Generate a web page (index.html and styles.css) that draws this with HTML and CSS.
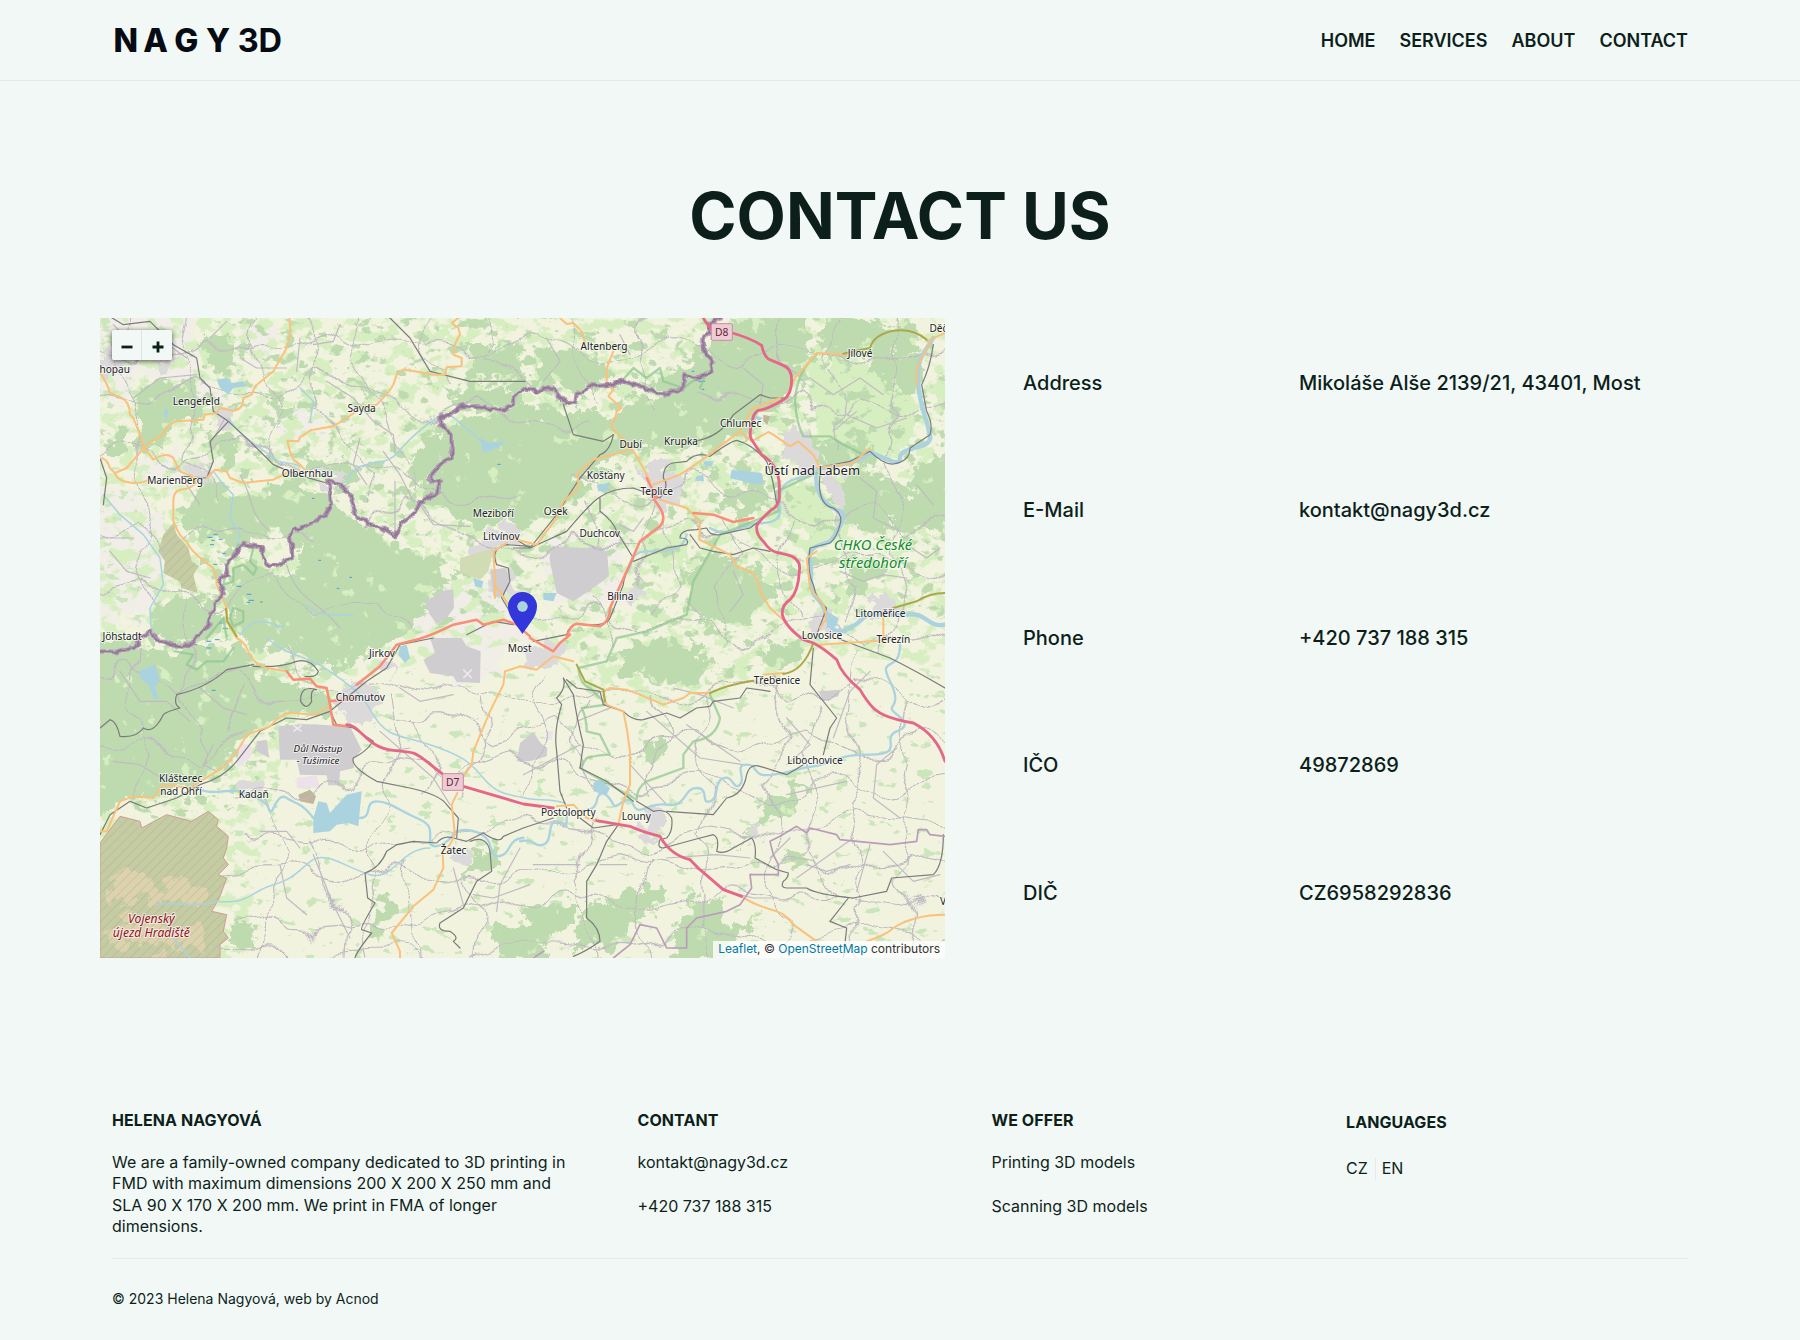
FILE: index.html
```html
<!DOCTYPE html>
<html lang="en">
<head>
<meta charset="utf-8">
<title>Contact us | NAGY 3D</title>
<link rel="stylesheet" href="styles.css">
</head>
<body>
<header class="header">
  <svg class="logo" viewBox="0 0 180 44" width="180" height="44" aria-label="NAGY 3D">
    <text class="logo-name" y="34" x="1.6 31.2 62.2 94">NAGY</text>
    <text class="logo-suffix" y="34" x="125.8 146.4">3D</text>
  </svg>
  <nav class="nav"><a>HOME</a><a>SERVICES</a><a>ABOUT</a><a>CONTACT</a></nav>
</header>
<main class="main">
  <h1 class="title">CONTACT US</h1>
  <section class="contact">
    <div class="map">
      <svg class="map-canvas" viewBox="0 0 2535 1920" preserveAspectRatio="none">
        <defs>
          <filter id="rough" filterUnits="userSpaceOnUse" x="0" y="0" width="2535" height="1920" color-interpolation-filters="sRGB">
            <feTurbulence type="fractalNoise" baseFrequency="0.02" numOctaves="5" seed="4" result="n"/>
            <feDisplacementMap in="SourceGraphic" in2="n" scale="110" xChannelSelector="R" yChannelSelector="G"/>
          </filter>
          <filter id="web" filterUnits="userSpaceOnUse" x="0" y="0" width="2535" height="1920" color-interpolation-filters="sRGB">
            <feTurbulence type="fractalNoise" baseFrequency="0.007" numOctaves="2" seed="12" result="n"/>
            <feDisplacementMap in="SourceGraphic" in2="n" scale="130" xChannelSelector="R" yChannelSelector="G"/>
          </filter>
          <filter id="jitter" filterUnits="userSpaceOnUse" x="0" y="0" width="2535" height="1920" color-interpolation-filters="sRGB">
            <feTurbulence type="fractalNoise" baseFrequency="0.04" numOctaves="2" seed="9" result="n"/>
            <feDisplacementMap in="SourceGraphic" in2="n" scale="20" xChannelSelector="R" yChannelSelector="G"/>
          </filter>
          <filter id="meadow" filterUnits="userSpaceOnUse" x="0" y="0" width="2535" height="1920" color-interpolation-filters="sRGB">
            <feTurbulence type="fractalNoise" baseFrequency="0.02 0.026" numOctaves="5" seed="21"/>
            <feColorMatrix values="0 0 0 0 .843  0 0 0 0 .933  0 0 0 0 .757  12 0 0 0 -6.1" result="p"/>
            <feComposite in="p" in2="SourceGraphic" operator="in"/>
          </filter>
          <filter id="groves" filterUnits="userSpaceOnUse" x="0" y="0" width="2535" height="1920" color-interpolation-filters="sRGB">
            <feTurbulence type="fractalNoise" baseFrequency="0.022 0.028" numOctaves="5" seed="37"/>
            <feColorMatrix values="0 0 0 0 .745  0 0 0 0 .859  0 0 0 0 .690  0 14 0 0 -8.4" result="p"/>
            <feComposite in="p" in2="SourceGraphic" operator="in"/>
          </filter>
          <filter id="copse" filterUnits="userSpaceOnUse" x="0" y="0" width="2535" height="1920" color-interpolation-filters="sRGB">
            <feTurbulence type="fractalNoise" baseFrequency="0.02 0.034" numOctaves="5" seed="52"/>
            <feColorMatrix values="0 0 0 0 .80  0 0 0 0 .90  0 0 0 0 .735  0 16 0 0 -10.6" result="p"/>
            <feComposite in="p" in2="SourceGraphic" operator="in"/>
          </filter>
          <filter id="clearing" filterUnits="userSpaceOnUse" x="0" y="0" width="2535" height="1920" color-interpolation-filters="sRGB">
            <feTurbulence type="fractalNoise" baseFrequency="0.018" numOctaves="5" seed="64"/>
            <feColorMatrix values="0 0 0 0 .843  0 0 0 0 .933  0 0 0 0 .757  0 0 16 0 -11.2" result="p"/>
            <feComposite in="p" in2="SourceGraphic" operator="in"/>
          </filter>
          <pattern id="hatch" width="20" height="20" patternUnits="userSpaceOnUse" patternTransform="rotate(45)">
            <rect width="20" height="20" fill="#cfae8c" fill-opacity=".32"/>
            <rect width="2.5" height="20" fill="#d08f78" fill-opacity=".4"/>
          </pattern>
        </defs>
        <rect width="2535" height="1920" fill="#f1f3de"/>

        <!-- open land -->
        <g filter="url(#rough)" fill="#f1eee8">
          <path d="M-40-40H250L300 170 210 200 120 180 60 250-40 230zM230 150L340 180 360 260 250 240zM500 260L640 250 680 320 620 370 540 350 490 300zM-40 520L90 510 200 620 180 720 210 820 150 900-40 900zM150 420H330V470L200 520 100 480zM390 20H520L510 140 440 120zM960 820L1180 770 1260 860 1260 960 1180 1080 1050 1100 950 960zM1330 670L1560 660 1590 850 1440 880 1340 830zM1600 480L1720 440 1800 520 1700 560z"/>
        </g>

        <!-- meadows and groves -->
        <path filter="url(#meadow)" d="M0 0H2535V1050L2240 1010 1760 1180 1480 1130 1300 960 900 1050 740 1100 560 1260 500 1500 430 1920H0z"/>
        <path filter="url(#rough)" fill="#d7eec1" d="M2120 130L2300 130 2420 240 2450 320 2400 400 2300 420 2200 370 2140 300zM2060 480L2160 520 2230 640 2180 690 2100 650 2040 580zM1130 480L1230 500 1270 560 1180 570zM1240 330L1370 300 1400 340 1290 360zM1640 640L1760 650 1800 720 1700 760 1600 720z"/>
        <path filter="url(#groves)" d="M400 0H2535V900L2240 940 1860 1100 1480 1070 1300 860 900 960 700 1100 560 1260 400 1500H0V1000L300 900V200z"/>
        <path filter="url(#copse)" d="M0 0H400V960H0zM400 1050H2535V1920H400z"/>

        <!-- forests -->
        <g filter="url(#rough)" fill="#bedbb0" id="forest">
          <path d="M310 50L400 60 410 110 370 170 320 150z"/>
          <path d="M150 200L270 180 320 230 330 290 240 310 200 350 160 390 120 370 120 260z"/>
          <path d="M500 240L580 250 570 300 520 310zM350 350L410 350 430 420 380 450 340 400zM0 350L70 340 80 400 30 430z"/>
          <path d="M575 390L660 420 750 430 780 470 740 500 700 480 620 450z"/>
          <path d="M440 520L560 490 670 510 710 580 620 640 590 700 540 650 500 650 430 690 390 660 260 650 240 600 270 530 350 480 400 520z"/>
          <path d="M930 420L1010 350 1090 300 1280 280 1420 270 1540 300 1600 240 1780 140 1840 20 2100-20 2140 110 2090 180 2060 250 1980 280 1930 350 1760 400 1600 400 1500 450 1420 540 1330 600 1260 620 1130 640 1020 560 970 560 950 500z"/>
          <path d="M1030 220L1120 200 1280 210 1280 280 1080 270zM1110 70L1230 60 1280 130 1290 210 1120 180z"/>
          <path d="M1300 90L1430 100 1520 130 1510 200 1400 230 1310 190z"/>
          <path d="M600 660L720 560 790 640 900 680 960 700 1020 750 1070 780 1000 830 960 880 930 960 800 990 720 1060 640 1040 560 990 450 1000 380 870 390 760 440 710 520 780 600 760z"/>
          <path d="M160 880L240 830 370 850 350 930 300 980 240 970 150 990z"/>
          <path d="M-20 950L100 980 200 1010 280 980 420 1000 470 1060 560 1080 680 1140 680 1190 540 1190 440 1260 380 1330 300 1380 200 1430 100 1440-20 1500z"/>
          <path d="M2160-20L2440 40 2490 100 2300 120 2150 110zM2320 110L2480 120 2460 200 2440 230 2350 200zM2450 440L2560 400V600L2460 650 2380 610 2420 540zM2180 360L2320 350 2300 440 2200 440zM2080 340L2200 380 2180 430 2100 400z"/>
          <path d="M2200 480L2380 470 2460 560 2440 620 2280 640 2210 600zM2250 760L2380 720 2350 780 2250 830zM1880 500L1980 490 2000 560 1920 590 1870 550z"/>
          <path d="M1780 740L1880 720 1980 760 2010 830 1960 900 1840 920 1760 880z"/>
          <path d="M1560 1000L1650 960 1780 980 1840 1040 1780 1100 1660 1090 1580 1060zM2000 1000L2110 960 2120 1020 2040 1060z"/>
          <path d="M1680 1260L1700 1290 1640 1340 1600 1330zM1990 1440L2060 1410 2140 1380 2060 1480 1940 1560 1870 1590 1960 1540z"/>
          <path d="M1290 1770L1420 1760 1420 1820 1330 1880 1340 1930 1240 1930zM1460 1760L1560 1740 1680 1680 1690 1750 1600 1810 1540 1890 1420 1880zM1740 1790L1850 1720 1890 1830 1990 1780 1870 1920 1720 1930zM2050 1620L2140 1600 2120 1640 2060 1650z"/>
          <path d="M820 1760L880 1720 870 1830 830 1870zM1100 1620L1180 1590 1190 1650 1110 1690zM380 1810L470 1830 460 1880 380 1880zM1180 1830L1290 1800 1280 1900 1200 1930z"/>
        </g>
        <use href="#forest" filter="url(#clearing)"/>

        <!-- towns -->
        <g filter="url(#rough)" fill="#dcd9da">
          <path d="M160 120L210 110 220 160 180 180zM0 120L60 100 80 150 40 190 0 180zM240 440L320 450 340 500 260 490zM350 270L400 280 390 330 350 320zM630 460L720 480 700 500 640 490z"/>
          <path d="M1100 680L1200 640 1280 620 1260 680 1130 710zM1180 760L1240 770 1230 830 1180 820zM1620 440L1720 450 1750 530 1680 570 1620 520zM1280 960L1400 970 1370 1050 1260 1050z"/>
          <path d="M2050 350L2110 330 2160 400 2170 460 2100 470 2050 400zM2140 440L2220 480 2240 620 2190 540zM730 1110L820 1090 840 1170 800 1210 720 1200 700 1150zM820 1040L880 1020 880 1080zM420 1370L490 1380 480 1440 420 1430zM1040 1590L1110 1600 1100 1630 1050 1640zM1630 1490L1700 1480 1680 1560 1620 1550zM1950 1530L1990 1520 1990 1570 1950 1570zM2310 830L2390 830 2380 890 2310 890zM2140 880L2200 900 2190 960 2140 950zM1560 800L1620 810 1600 860 1550 840z"/>
        </g>

        <!-- quarries -->
        <g fill="#d0cdd0">
          <path d="M1355 685L1460 690 1500 683 1522 708 1527 775 1480 810 1420 850 1370 825 1360 780 1348 720z"/>
          <path d="M975 850L1040 815 1060 815 1062 870 1040 900 1010 918 990 890zM990 960L1085 960 1100 985 1142 1000 1140 1095 1070 1092 1060 1075 990 1065 970 1025 1005 1005z"/>
          <path d="M535 1225L610 1218 750 1225 785 1295 760 1325 762 1350 720 1360 718 1402 685 1402 680 1372 600 1370 590 1325 540 1325zM470 1270L500 1265 508 1320 470 1300zM1260 1275L1300 1242 1322 1275 1342 1290 1340 1315 1290 1330 1250 1330zM2155 1120L2220 1115 2215 1135 2170 1148zM1170 755L1215 750 1230 780 1210 840 1180 835z"/>
          <path fill="#bfb69b" d="M595 1430L630 1415 648 1435 640 1458 600 1450zM1990 290L2010 295 2002 320 1990 310z"/>
          <path fill="#eee2ea" d="M590 1380L650 1372 660 1410 590 1410zM420 1270L460 1290 450 1320 410 1350zM1340 1240L1360 1240 1355 1265 1335 1265z"/>
          <path fill="#d2dcb4" d="M1080 720L1180 690 1165 760 1140 785 1080 760z"/>
        </g>
        <path d="M1090 1055L1115 1080M1115 1055L1090 1080M580 1222L605 1240M605 1222L580 1240" fill="none" stroke="#eceaec" stroke-width="5"/>

        <!-- military areas -->
        <path d="M220 615L230 650 265 690 275 730 297 745 280 770 293 825 245 810 238 790 190 765 195 730 175 700 190 650z" fill="#bedbb0"/>
        <path d="M220 615L230 650 265 690 275 730 297 745 280 770 293 825 245 810 238 790 190 765 195 730 175 700 190 650z" fill="url(#hatch)"/>
        <path d="M0 1575L60 1495 120 1510 125 1530 200 1490 275 1510 325 1480 355 1505 350 1525 385 1555 380 1590 370 1620 385 1640 355 1670 380 1680 360 1735 335 1780 380 1790 370 1840 385 1860 360 1880V1920H0z" fill="#bedbb0"/>
        <path filter="url(#rough)" fill="#e0e6be" d="M40 1680L120 1660 170 1700 250 1690 310 1730 300 1780 200 1740 100 1760 40 1740zM30 1810L130 1790 200 1830 310 1810 320 1900H180L120 1870 30 1880z"/>
        <path d="M0 1575L60 1495 120 1510 125 1530 200 1490 275 1510 325 1480 355 1505 350 1525 385 1555 380 1590 370 1620 385 1640 355 1670 380 1680 360 1735 335 1780 380 1790 370 1840 385 1860 360 1880V1920H0z" fill="url(#hatch)" stroke="#cf9d92" stroke-width="3"/>

        <!-- lesser roads -->
        <g class="lane" filter="url(#web)">
          <path d="M-60 60L180 130 330 60 470 120 700 50 830 90 980 60 1160 110 1320 50 1530 120 1700 60 1900 130 2110 70 2300 140 2600 70"/>
          <path d="M-60 230L150 260 310 190 500 220 620 160 850 230 960 300 1150 250 1290 320 1460 340M1800 260L1960 220 2130 280 2300 240 2450 300 2600 260"/>
          <path d="M-60 420L130 380 250 430 430 370 620 460 800 420 900 500 1080 560 1240 500M1430 480L1620 560 1760 480 1960 530 2130 620 2290 560 2420 640 2600 580"/>
          <path d="M-60 640L90 600 200 690 420 620 510 670 640 660M780 600L940 560 1100 640 1280 720 1420 640 1600 700 1780 620 1950 700 2120 780 2300 700 2480 800 2600 760"/>
          <path d="M-60 830L140 800 330 860 520 780 640 880 820 860 950 960M1280 900L1480 880 1600 960 1800 920 1960 980 2120 900 2290 980 2460 940 2600 1000"/>
          <path d="M-60 1080L90 1040 230 1120 400 1080 560 1160 700 1110 880 1080 1060 1140 1200 1110 1340 1180 1500 1090 1700 1150 1900 1090 2070 1160 2260 1080 2420 1160 2600 1100"/>
          <path d="M-60 1290L160 1270 290 1340 430 1240M870 1200L1040 1190 1180 1280 1360 1230 1540 1330 1760 1240 1920 1310 2100 1230 2280 1310 2470 1240 2600 1300"/>
          <path d="M400 1440L580 1430 760 1400 880 1330 1060 1360 1250 1300 1440 1370 1620 1420 1830 1370 2010 1460 2200 1380 2340 1430 2600 1370"/>
          <path d="M430 1550L620 1570 840 1580 1060 1560 1210 1500 1420 1540 1640 1600 1840 1530 2040 1560 2260 1500 2600 1540"/>
          <path d="M390 1660L560 1640 760 1700 940 1660 1140 1690 1350 1650 1560 1610 1800 1660 2010 1620 2230 1660 2420 1600 2600 1660"/>
          <path d="M420 1790L600 1840 780 1810 970 1830 1190 1760 1400 1730 1620 1770 1820 1720 2030 1750 2260 1740 2600 1780"/>
          <path d="M370 1890L620 1900 850 1890 1080 1920 1320 1860 1560 1880 1790 1840 2060 1890 2310 1830 2600 1870"/>
          <path d="M80-60L60 130 110 260 90 400 150 560 110 700 160 860M270-60L240 100 290 250 260 420 330 560M480-60L460 120 540 280 500 420M620-60L610 120 650 250 740 330 810 460 780 560M820-60L760 120 860 290 900 420 960 540M1000-60L980 120 1060 200"/>
          <path d="M1180-60L1150 120 1290 190M1400-60L1430 140 1500 260M1650-60L1610 120 1660 260M2060-60L2030 120 2080 230M2260-60L2180 110 2230 240 2180 380M2410-60L2370 120 2400 280 2340 430 2400 560 2350 700 2420 830 2360 1010"/>
          <path d="M240 860L290 990 240 1130 320 1260 290 1410M120 1000L90 1160 140 1300 90 1430M420 1110L380 1260M560 980L620 1080M880 1110L900 1260 860 1410 790 1560 830 1700 780 1820 820 1980"/>
          <path d="M490 1480L550 1600 490 1700 500 1830 460 1980M640 1560L690 1700 740 1830 730 1980M940 1190L1000 1320 960 1440M960 1640L930 1780 950 1980M1140 1130L1160 1280 1100 1440M1090 1690L1140 1800 1120 1980"/>
          <path d="M1340 1040L1290 1200 1330 1300 1270 1420M1470 1120L1420 1290 1500 1430M1660 1150L1700 1300 1660 1420M1820 1110L1780 1280 1850 1420 1800 1560 1830 1700 1780 1830 1810 1980M2000 1100L2060 1260 1990 1400 2060 1550 2000 1700 2060 1830 2010 1980"/>
          <path d="M2150 1150L2100 1310 2170 1450 2120 1610 2190 1740M2260 1000L2230 1180 2300 1340 2240 1480 2290 1650 2240 1780 2300 1980M2420 1150L2390 1340 2440 1480 2390 1650 2450 1800 2410 1980M1460 1500L1410 1680 1500 1850 1470 1980M1640 1620L1600 1790 1660 1980"/>
          <path d="M1470 860L1530 960M1700 620L1740 780 1660 880M1860 600L1900 720 1840 820 1880 960M2080 600L2040 760 2100 900M2210 640L2280 800 2230 920M1640 560L1600 680 1640 800M1460 560L1500 660"/>
        </g>
        <g class="lane">
          <path d="M375 300L330 380M420 470C470 560 440 580 510 640M560 740C590 850 650 840 720 930M680 190L760 240 820 310 880 350 885 400M885 490V640M960 560L1000 620 1110 625M1260 1590L1200 1700 1190 1780M840 1240L1000 1380 1050 1460M640 1610L700 1760 750 1860M1060 1650L1090 1760M1590 1340L1700 1460M1760 1220L1920 1330M2090 1680L2260 1560M2270 1720L2310 1580M1270 1370L1440 1280M2060 1430L2240 1390"/>
          <path d="M40 20L110 90 190 70 260 120M100 240L180 180 290 170M330 60L380 10M420 120L470 150 560 150M600 60L590 160M720 20L700 70 640 80M780 360L760 440 800 500M850 400L900 470 940 550M30 700L80 760 150 780M0 660L100 660M260 500L300 560M1340 60L1380 130 1330 190M1560 50L1590 110M1930 150L1990 200 1980 260M2130 180L2200 230 2280 180 2350 230M2240 290L2330 330 2420 300M2200 340L2270 280M2280 480L2330 520 2320 600 2400 640M2450 500L2500 560M1560 620L1600 640 1630 600M1760 850L1800 890M1900 760L1930 830 1890 880M2220 760L2290 790 2350 770 2420 780M2420 680L2480 720 2520 690M60 1060L120 1150 200 1150 270 1210M300 1110L370 1170 440 1190M40 1330L120 1340 200 1390M340 1280L310 1340 350 1360M480 1540L560 1540 600 1590M540 1640L560 1740 620 1790M860 1300L930 1290M900 1110L960 1150 1060 1130M1430 1210L1530 1170M1640 1180L1800 1320 1930 1340M1720 1110L1800 1130 1900 1170M2060 1200L2130 1280 2060 1340M2310 1060L2250 1120 2200 1260M2390 1290L2330 1340 2320 1440 2400 1500M2350 1600L2440 1690 2520 1670M1700 1620L1850 1610 1950 1620M1880 1720L1960 1740 2030 1740M1500 1640L1580 1640M1300 1640L1370 1640 1440 1640M1120 1730L1180 1740 1290 1700M2070 1560L2010 1620M2120 1640L2180 1660 2250 1640"/>
        </g>

        <!-- water -->
        <g fill="#aad3df">
          <path d="M350 185L380 180 395 195 430 190 440 205 400 210 385 230 360 210zM1140 360L1170 375 1220 370 1190 390 1150 405 1145 385zM1895 455L1985 465 1992 495 1970 500 1890 480zM1490 500L1530 495 1520 520 1495 520zM1810 430L1840 430 1835 445 1815 445zM1790 475L1810 470 1812 490 1785 488zM1960 290L1990 300 1975 308z"/>
          <path d="M115 1060L165 1040 180 1085 165 1105 175 1145 160 1140 145 1100 120 1080zM640 1500L655 1450 680 1455 690 1485 740 1430 785 1420 775 1525 745 1515 710 1520 690 1540 640 1545zM1480 1395L1500 1385 1530 1410 1520 1430 1480 1420zM900 985L920 980 930 1020 915 1035 895 1010zM2180 880L2215 900 2210 925 2180 930zM1330 825L1370 825 1360 850 1330 845zM190 280L205 270 200 310zM1120 780L1150 790 1145 810 1125 805z"/>
        </g>
        <path class="marsh" d="M322 658h16M341 649h12M334 667h10M356 664h10M330 680h12M366 706h12M340 739h12M410 805h14M440 829h14M446 847h16M480 852h8M440 853h10M358 915h10M368 931h16M710 811h8M748 778h8M1192 439h10M636 541h8M655 727h8M320 970h14M345 965h14M318 990h16M335 1117h12M1795 190h20M1805 214h8M1775 160h8"/>
        <g class="river">
          <path d="M10 530L60 590 130 650 180 720 190 800 150 870 155 960M340 460L370 500 400 530 390 600 420 650 410 680M385 300C420 360 500 400 520 420S570 430 600 445M740 500C750 440 800 440 850 430S900 370 1010 300M1050 290L1110 340 1145 370M600 210L640 250 630 310M420 950C470 890 500 910 550 930M620 860C660 900 700 890 760 890"/>
          <path d="M500 960C570 1020 620 1010 690 1060S780 1120 820 1190 900 1250 990 1280 1110 1330 1150 1380 1230 1430 1275 1440 1340 1440 1395 1455"/>
          <path class="wide" d="M290 1410C350 1440 380 1400 450 1430S500 1470 510 1480 530 1420 560 1440 600 1450 640 1500M780 1500C820 1500 790 1450 830 1450S900 1480 950 1500 990 1540 990 1570 1040 1580 1060 1550 1160 1540 1170 1580 1190 1620 1210 1610 1230 1560 1270 1560"/>
          <path class="wide" d="M1260 1570C1310 1560 1300 1590 1330 1580S1340 1510 1370 1510 1400 1540 1400 1500 1480 1500 1490 1450 1530 1440 1540 1460 1580 1420 1600 1460 1640 1450 1700 1460 1750 1410 1790 1410 1800 1460 1830 1450 1840 1390 1870 1380 1900 1420 1920 1400 1900 1340 1940 1340 1950 1380 2020 1370 2090 1350 2140 1345 2200 1310 2310 1310 2340 1260 2390 1240 2400 1200 2380 1180 2410 1170 2370 1090 2400 1070 2400 980"/>
          <path d="M350 1750C450 1760 450 1720 520 1700S600 1650 640 1625 740 1650 810 1670 900 1590 990 1590M170 1760C220 1750 300 1770 350 1750M220 1860L270 1920"/>
          <path class="elbe" d="M2500 60C2460 120 2450 130 2455 200S2480 300 2490 350 2400 380 2400 420 2320 390 2300 410 2230 440 2160 450M2150 460C2140 540 2190 570 2220 580S2200 660 2190 670 2120 680 2130 720 2120 810 2150 840 2170 880 2190 920 2260 930 2290 900 2360 900 2420 890 2480 930 2535 920"/>
          <path class="wide" d="M2140 470C2080 480 2030 490 2040 560S1980 610 1950 620 1880 660 1830 630M1760 650C1750 700 1700 700 1640 700S1600 760 1580 760"/>
        </g>

        <!-- nature reserve rims -->
        <g class="reserve">
          <path d="M380 750L415 680 460 690 450 730 470 750 460 770 430 740 400 750 400 790 370 800zM400 870L430 880 430 910 400 925 390 900zM320 960L370 900 380 960"/>
          <path d="M225 1000L280 1010 260 1040 290 1055 320 1030 370 1030 400 990"/>
          <path d="M1565 190L1600 150 1640 180 1680 150 1690 190 1750 210 1820 160 1800 210"/>
          <path d="M2150 110Q2090 160 2085 250 2090 320 2110 355L2190 355 2230 380 2290 410M2150 465L2030 520 2035 580 1860 650 1820 720 1780 790 1760 890 1640 940 1550 960 1520 1030 1435 1050Q1440 1100 1470 1110L1520 1160 1445 1170Q1460 1200 1460 1240L1500 1250 1530 1310Q1500 1310 1460 1320L1440 1350 1610 1445Q1610 1410 1640 1390L1750 1350 1750 1310 1780 1270Q1850 1260 1860 1200L1830 1130"/>
        </g>

        <!-- railways -->
        <g class="rail">
          <path d="M20-10L70 20 150 10 220 80 290 120 300 180 330 210 340 280 385 310 450 370 520 440 590 470 680 495M385 310L330 370 340 430 320 480 250 475M0 420L20 480 10 560M870 0L930 60 990 160 1110 190 1275 190M1390 260L1420 350 1510 370 1540 350"/>
          <path d="M1540 350Q1530 400 1500 410L1440 480Q1400 540 1370 590L1290 690 1240 660"/>
          <path d="M1240 690H1290L1400 640C1470 560 1500 510 1600 510L1680 540Q1710 500 1690 480 1690 440 1720 435L1760 430Q1790 400 1830 415 1890 370 1910 367 1960 380 2000 430 2020 480 2030 560M1500 540L1500 580Q1540 610 1550 640L1600 720Q1570 780 1570 800L1530 900Q1520 925 1450 920 1410 910 1400 950L1300 970M1600 730L1700 690 1760 680Q1770 660 1740 660 1740 635 1790 635L1820 630Q1830 655 1860 650L1950 630 1990 600M1770 650L1800 690 1840 700 1900 710 1960 690 2010 700"/>
          <path d="M1780 370Q1860 360 1900 290L1980 230 2010 240 2060 240M2150 450L2250 430 2310 400Q2350 440 2380 438 2430 430 2430 390L2490 350Q2500 320 2480 280L2465 200Q2490 150 2500 80"/>
          <path d="M2160 470Q2150 560 2200 570 2230 590 2220 620 2210 660 2190 675L2130 690Q2120 760 2140 800 2150 850 2180 870L2150 950M2210 960L2370 1020Q2450 1060 2535 1110M2140 990L2130 1100 2210 1200 2190 1230 2170 1310M1390 1080Q1400 1110 1370 1140L1385 1160Q1360 1240 1370 1300L1380 1420 1400 1470M1390 1080L1420 1130Q1430 1200 1450 1280L1440 1350 1520 1390 1600 1450M1400 1085L1430 1110 1500 1120 1510 1160 1570 1180Q1600 1210 1630 1205L1700 1185 1740 1200 1790 1170 1830 1165 1840 1150 1920 1140 1940 1110 2010 1120"/>
          <path d="M1610 1450L1660 1480Q1700 1470 1715 1500 1720 1540 1700 1560L1680 1565Q1670 1590 1690 1590L1800 1560 1840 1550Q1860 1560 1850 1600 1870 1610 1900 1590L1955 1560Q1970 1580 1965 1620L2030 1655 2065 1665Q2065 1680 2050 1690 2040 1710 2060 1710L2120 1710Q2150 1730 2260 1740L2360 1720 2375 1680 2500 1670Q2530 1640 2530 1550"/>
          <path d="M1555 1520L1520 1570 1490 1640 1460 1690 1460 1800Q1500 1830 1500 1870 1460 1900 1420 1915M1700 1480L1840 1490 1880 1440Q1930 1430 1940 1370 1950 1335 1980 1345L2060 1370 2110 1340M2245 1740L2190 1810 2240 1830 2230 1920"/>
          <path d="M0 1550L30 1490 90 1450 140 1470 230 1440 300 1400Q370 1380 410 1330L480 1240 560 1200 620 1205 690 1180 710 1220 760 1230 820 1270M815 1275Q800 1300 760 1320 750 1345 830 1390L930 1410Q1020 1430 1040 1460L1075 1500 1070 1560M690 1180L800 1090 860 1050 900 980 1000 960M1100 950L1180 910 1240 920M1235 890L1205 840 1230 790 1225 750 1190 740Q1170 690 1220 680L1290 685M460 1040L380 1055Q320 1110 230 1130 220 1160 240 1170 200 1180 190 1190 160 1250 130 1230 110 1260 60 1255 50 1210 30 1205L0 1230M460 1045Q540 1050 590 1030 630 1020 655 1060 650 1080 615 1075M650 1115Q600 1100 602 1150 620 1180 635 1150 630 1110 650 1115"/>
          <path d="M795 1665Q840 1650 860 1600L890 1580 940 1570 1010 1575Q1030 1550 1060 1560L1100 1570 1150 1545Q1200 1580 1210 1555L1270 1530 1360 1500M795 1665L803 1740 825 1755Q780 1830 785 1835L815 1845Q770 1900 765 1920M1110 1570Q1160 1550 1170 1600L1175 1660 1130 1690 1090 1770 1020 1815Q1010 1840 1050 1840 1080 1860 1060 1870L1080 1890M1440 1500L1480 1530 1550 1520"/>
        </g>

        <!-- main roads -->
        <g class="primary">
          <path d="M0 165Q20 190 30 225L60 237Q90 250 90 290L100 300 120 350 130 385 160 425Q200 400 220 420L240 460 290 480Q290 510 240 515 220 520 220 550L220 610Q240 660 260 670 270 700 340 750 350 770 350 800L380 870 380 910 410 960Q430 970 440 990 460 1040 500 1050L560 1060"/>
          <path d="M568 0L572 40 560 90 520 160 465 205 455 230 430 240Q430 275 400 278L360 270 350 285 315 290 310 305 230 310Q195 320 190 350L140 380 80 450 45 465Q50 490 100 495 140 495 150 480M0 420Q20 420 30 450L45 465M320 480L345 455 380 460 390 480 430 495 520 485 560 465M635 335L600 358 595 370 562 368 570 400 580 425 600 440 620 460M640 335L700 325 740 300 790 265 830 260Q870 220 880 200L890 170Q910 150 920 155L1000 170 1035 170 1040 148 1085 145 1085 120 1060 110Q1060 80 1080 50L1075 30 1055 15 1075 0"/>
          <path d="M1380 0L1400 18 1420 15 1445 40 1455 75M1540 100L1520 150 1520 200 1540 215 1525 235 1565 270 1550 280 1545 305 1535 315 1540 335 1595 390 1630 450 1650 490M1590 395L1480 425 1430 470Q1440 500 1430 515L1390 550 1370 600 1310 680 1230 660M1660 500L1740 470 1800 430 1920 340 1955 275 2040 240M2060 235L2085 180 2150 105 2240 110M2480 70L2535 45M2490 75L2450 150 2450 200M1920 340L1955 370 2005 342 2020 350 2070 385 2095 370 2140 410 2160 450M1680 545L1760 570 1800 610 1798 665 1850 690 1890 710 1910 745 1950 760Q1980 780 1980 820L2010 870 2060 915M2150 450L2260 435 2310 390M2150 700L2120 720 2130 810 2170 860 2180 900 2160 930M2350 890V960"/>
          <path d="M1260 1045L1310 1055 1360 1015 1420 1030M1510 1120L1530 1110 1580 1115 1620 1130 1690 1160 1750 1140 1770 1125 1830 1125M1510 1130L1520 1160 1570 1180 1580 1230 1590 1300 1590 1400 1570 1450 1555 1520M1370 1465L1420 1460 1460 1500 1500 1512M1990 1070L2050 1065M2160 980L2380 965M1925 1735Q1960 1760 2030 1780 2060 1790 2080 1820L2150 1870M2300 1870Q2360 1850 2380 1830 2440 1790 2535 1790"/>
          <path d="M0 1540L20 1540 40 1495 60 1450 100 1435 160 1440 190 1400 270 1410 350 1360Q400 1330 440 1250L510 1225Q550 1180 580 1185L640 1190 690 1165M1215 1060L1210 1100 1170 1180 1120 1300 1115 1340 1080 1390M1072 1425L1055 1460 1065 1550 1050 1580 1028 1600 1030 1650 1000 1715 940 1765 875 1845 900 1900V1920M1185 840L1185 780 1180 700 1220 675M1185 800L1225 860M1215 1060L1260 1045"/>
        </g>
        <path class="olive" d="M378 872L382 910 410 955M2230 107L2310 90Q2320 50 2380 38 2440 30 2480 65M2380 870L2450 850Q2490 825 2535 825M1430 1040L1455 1090 1510 1115 1515 1150M1830 1125Q1880 1100 1960 1088M2050 1068Q2110 1060 2140 975"/>
        <path class="trunk" d="M560 1060L580 1085 630 1082 650 1105 680 1110 690 1160 700 1220 740 1225M690 1150L770 1140M770 1100L840 1045 890 980 960 962Q1000 950 1060 920L1130 905 1150 920 1210 905 1250 920 1290 955M1400 960Q1410 920 1430 917L1500 925Q1530 910 1530 870L1580 760 1620 670 1680 625Q1700 600 1680 570L1660 540M1640 480L1670 540M1780 585L1840 590 1900 612 1960 600M1290 960L1360 1000 1380 975 1410 950"/>

        <!-- country and region borders -->
        <g class="frontier" filter="url(#jitter)">
          <path id="border" d="M1860 0L1825 15 1830 40 1808 60 1808 95 1840 130 1832 160 1790 183 1752 172 1750 210 1700 230 1675 228 1640 210 1600 200 1570 190 1530 200 1490 205 1465 200 1455 220 1430 228 1425 255 1390 250 1370 225 1345 208 1310 220 1275 212 1240 240 1238 265 1190 278 1140 265 1085 265 1050 290 1018 300 1022 320 1055 350 1055 420 1025 435 990 475 1000 490 1017 490 1015 525 960 550 945 585 905 615 885 655 840 625 805 622 798 605 770 600 750 530 722 498 685 488 690 565 672 595 600 632 580 635 570 655 578 720 508 745 490 725 485 688 430 678 380 735 385 770 358 785 372 830 350 850 330 890 328 920 292 955 280 975 240 985 180 970 150 940 125 960 100 990 50 1002 0 1000"/>
          <use class="frontier-core" href="#border"/>
        </g>
        <path class="region" d="M2535 1555L2490 1550 2480 1535 2455 1535 2450 1570 2370 1580 2220 1565 2210 1550 2130 1530 2120 1545 2090 1525 2040 1555 2010 1570 2020 1610 2035 1640 2035 1670 1950 1670 1955 1710 1920 1760 1880 1780 1790 1800 1760 1830 1760 1890 1700 1890 1670 1830 1620 1820 1590 1880 1540 1920M1300 1920L1330 1900"/>

        <!-- motorways -->
        <path class="motorway" d="M1810 0Q1825 25 1835 35M1897 45Q1950 60 1985 82 1990 110 2005 123L2045 140Q2075 150 2075 185 2075 230 2050 245 2000 275 1975 277 1960 285 1957 310 1945 350 1955 365L1985 410Q2035 440 2038 500V540Q2035 565 2015 575 1975 610 1970 625 1968 650 1990 670 2010 700 2030 703L2060 710Q2105 720 2098 760 2095 820 2070 845 2045 860 2047 890 2055 925 2110 965L2140 975Q2170 990 2210 1025 2225 1070 2280 1115 2300 1150 2320 1170 2350 1200 2440 1215 2510 1250 2535 1330"/>
        <path class="motorway" d="M740 1220C780 1220 800 1290 880 1297S940 1300 1030 1370M1090 1405L1270 1458 1360 1470M1490 1508L1590 1525Q1620 1540 1680 1555 1710 1610 1770 1625L1800 1655 1870 1715 1925 1735"/>

        <!-- road shields -->
        <g class="shield">
          <rect x="1834" y="17" width="63" height="50" rx="4"/><text x="1865" y="54">D8</text>
          <rect x="1027" y="1367" width="63" height="50" rx="4"/><text x="1058" y="1404">D7</text>
        </g>

        <!-- place names -->
        <g class="place">
          <text x="44" y="165">hopau</text><text x="289" y="260">Lengefeld</text><text x="785" y="283">Sayda</text>
          <text x="622" y="477">Olbernhau</text><text x="225" y="497">Marienberg</text><text x="1180" y="598">Meziboří</text>
          <text x="1204" y="667">Litvínov</text><text x="66" y="967">Jöhstadt</text>
          <text x="1512" y="97">Altenberg</text><text x="2280" y="118">Jílové</text><text x="2515" y="42">Děč</text>
          <text x="1922" y="327">Chlumec</text><text x="1743" y="380">Krupka</text><text x="1592" y="391">Dubí</text>
          <text x="1517" y="482">Košťany</text><text x="1670" y="532">Teplice</text><text x="1367" y="592">Osek</text>
          <text x="1499" y="657">Duchcov</text><text x="1561" y="847">Bílina</text><text x="2341" y="898">Litoměřice</text>
          <text x="2166" y="963">Lovosice</text><text x="2380" y="975">Terezín</text><text x="1259" y="1003">Most</text>
          <text x="846" y="1017">Jirkov</text><text x="781" y="1150">Chomutov</text><text x="2031" y="1097">Třebenice</text>
          <text x="2145" y="1338">Libochovice</text><text x="242" y="1393">Klášterec</text><text x="243" y="1431">nad Ohří</text>
          <text x="461" y="1440">Kadaň</text><text x="1405" y="1495">Postoloprty</text><text x="1609" y="1505">Louny</text>
          <text x="1061" y="1609">Žatec</text><text x="2529" y="1762">V</text>
          <text class="place-city" x="2137" y="470">Ústí nad Labem</text>
          <text class="place-mine" x="654" y="1303">Důl Nástup</text><text class="place-mine" x="654" y="1339">- Tušimice</text>
          <text class="place-park" x="2319" y="697">CHKO České</text><text class="place-park" x="2319" y="751">středohoří</text>
          <text class="place-army" x="154" y="1814">Vojenský</text><text class="place-army" x="154" y="1857">újezd Hradiště</text>
        </g>
      </svg>
      <svg class="pin" viewBox="0 0 29 42" width="29" height="42"><path fill="#3336db" fill-rule="evenodd" d="M14.5 0A14.5 14.5 0 0 0 0 14.5C0 25 9 33 14.5 42 20 33 29 25 29 14.5A14.5 14.5 0 0 0 14.5 0zm0 9.6a5 5 0 1 1 0 10 5 5 0 0 1 0-10z"/><circle cx="14.5" cy="14.6" r="5" fill="#aad3df"/></svg>
      <div class="zoom">
        <button class="zoom-btn" aria-label="Zoom out"><svg width="12" height="12"><path d="M.5 6H11.5" stroke="currentColor" stroke-width="2.8"/></svg></button>
        <button class="zoom-btn" aria-label="Zoom in"><svg width="12" height="12"><path d="M.5 6H11.5M6 .5V11.5" stroke="currentColor" stroke-width="2.8"/></svg></button>
      </div>
      <div class="attribution"><a>Leaflet</a>, © <a>OpenStreetMap</a> contributors</div>
    </div>
    <dl class="details">
      <dt>Address</dt><dd>Mikoláše Alše 2139/21, 43401, Most</dd>
      <dt>E-Mail</dt><dd>kontakt@nagy3d.cz</dd>
      <dt>Phone</dt><dd>+420 737 188 315</dd>
      <dt>IČO</dt><dd>49872869</dd>
      <dt>DIČ</dt><dd>CZ6958292836</dd>
    </dl>
  </section>
</main>
<footer class="footer">
  <div class="footer-cols">
    <div class="col"><h2>HELENA NAGYOVÁ</h2><p class="about">We are a family-owned company dedicated to 3D printing in FMD with maximum dimensions 200 X 200 X 250 mm and SLA 90 X 170 X 200 mm. We print in FMA of longer dimensions.</p></div>
    <div class="col"><h2>CONTANT</h2><a>kontakt@nagy3d.cz</a><a>+420 737 188 315</a></div>
    <div class="col"><h2>WE OFFER</h2><a>Printing 3D models</a><a>Scanning 3D models</a></div>
    <div class="col col-lang"><h2>LANGUAGES</h2><div class="langs"><a>CZ</a><a>EN</a></div></div>
  </div>
  <p class="copyright">© 2023 Helena Nagyová, web by Acnod</p>
</footer>
</body>
</html>
```
FILE: styles.css
```css
* { box-sizing: border-box; }
body {
  margin: 0;
  background: #f2f8f6;
  color: #0d1f1a;
  font-family: Inter, "Liberation Sans", sans-serif;
}
h1, h2, p, dl, dd { margin: 0; }

.header {
  display: flex;
  justify-content: space-between;
  align-items: center;
  height: 81px;
  padding: 0 112px;
  border-bottom: 1px solid #e6ebea;
}
.logo { display: block; overflow: visible; fill: #070b14; font-size: 32.5px; margin-bottom: 1px; }
.logo-name { font-weight: 850; font-size: 32px; }
.logo-suffix { font-weight: 700; }
.nav { display: flex; gap: 24px; padding-top: 2px; font-size: 18px; font-weight: 600; line-height: 24px; }

.main { padding: 0 100px; }
.title {
  padding-top: 96px;
  font-size: 64px;
  font-weight: 700;
  line-height: 77px;
  text-align: center;
}
.contact { display: flex; gap: 78px; margin-top: 64px; height: 640px; }

.map { position: relative; flex: 0 0 845px; height: 640px; overflow: hidden; }
.map-canvas { display: block; width: 845px; height: 640px; }
.pin { position: absolute; left: 407.5px; top: 274px; }
.zoom {
  position: absolute;
  left: 12px;
  top: 12px;
  display: flex;
  border-radius: 2px;
  box-shadow: 0 1px 5px rgba(0, 0, 0, .65);
}
.zoom-btn {
  display: grid;
  place-items: center;
  width: 30px;
  height: 30px;
  padding: 3px 0 0 1px;
  border: 0;
  background: #f2f8f6;
  color: #0d1f1a;
}
.zoom-btn:first-child { border-right: 1px solid #dfe5e3; border-radius: 2px 0 0 2px; }
.zoom-btn:last-child { border-radius: 0 2px 2px 0; }
.attribution {
  position: absolute;
  right: 0;
  bottom: 0;
  padding: 0 5px 1px;
  background: rgba(255, 255, 255, .8);
  color: #333;
  font-size: 12px;
  line-height: 16px;
  white-space: nowrap;
}
.attribution a { color: #0078a8; }

.lane, .river, .rail, .primary, .reserve, .frontier,
.olive, .trunk, .region, .motorway { fill: none; stroke-linejoin: round; stroke-linecap: round; }
.lane { stroke: #c0bbc2; stroke-width: 3.6; }
.marsh { fill: none; stroke: #4a9be0; stroke-width: 3; }
.river { stroke: #aad3df; stroke-width: 4.5; }
.wide { stroke-width: 7; }
.elbe { stroke-width: 13; }
.reserve { stroke: #8fc590; stroke-width: 7; stroke-opacity: .7; }
.rail { stroke: #7b7b7b; stroke-width: 3.6; }
.primary { stroke: #fac17c; stroke-width: 6; }
.olive { stroke: #aaa848; stroke-width: 6; }
.trunk { stroke: #fa8d74; stroke-width: 7.5; }
.frontier { stroke: #ae98b0; stroke-width: 13; }
.frontier-core { stroke: #917496; stroke-width: 5; }
#border { stroke-width: inherit; }
.region { stroke: #ba9cba; stroke-width: 5; }
.motorway { stroke: #e66687; stroke-width: 8.5; }
.shield rect { fill: #edcdd5; stroke: #d7899f; stroke-width: 3; }
.shield text { fill: #6b1b37; font: 31px "Noto Sans", sans-serif; text-anchor: middle; }
.place {
  fill: #222;
  font: 30.3px "Noto Sans", sans-serif;
  text-anchor: middle;
  stroke: rgba(255, 255, 255, .65);
  stroke-width: 6px;
  stroke-linejoin: round;
  paint-order: stroke;
}
.place-city { font-size: 39px; }
.place-mine { font-size: 29.5px; font-style: italic; }
.place-park { font-size: 44.5px; font-style: italic; fill: #118a2a; }
.place-army { font-size: 36.5px; font-style: italic; fill: #96101f; }

.details {
  display: grid;
  grid-template-columns: 276px 1fr;
  grid-auto-rows: 127.5px;
  align-content: center;
  align-items: center;
  flex: 1;
  padding-bottom: 1px;
  font-size: 20px;
  font-weight: 500;
  line-height: 24px;
}

.footer { padding: 150px 112px 0; }
.footer-cols {
  display: grid;
  grid-template-columns: 525.5px 354px 354.5px 1fr;
  height: 151px;
  border-bottom: 1px solid #e6ebea;
}
.col { display: flex; flex-direction: column; font-size: 16px; line-height: 21.5px; }
.col h2 { font-size: 16px; font-weight: 700; line-height: 24px; letter-spacing: .08px; margin-bottom: 20px; }
.col > a { margin-bottom: 22.5px; }
.about { width: 465px; line-height: 21.4px; }
.col-lang { padding-top: 2px; }
.col-lang h2 { margin-bottom: 24px; }
.langs { display: flex; }
.langs a:first-child { padding-right: 7px; margin-right: 6px; border-right: 1px solid #e6ebea; }
.copyright { padding-top: 30px; font-size: 14px; line-height: 20px; }
```
